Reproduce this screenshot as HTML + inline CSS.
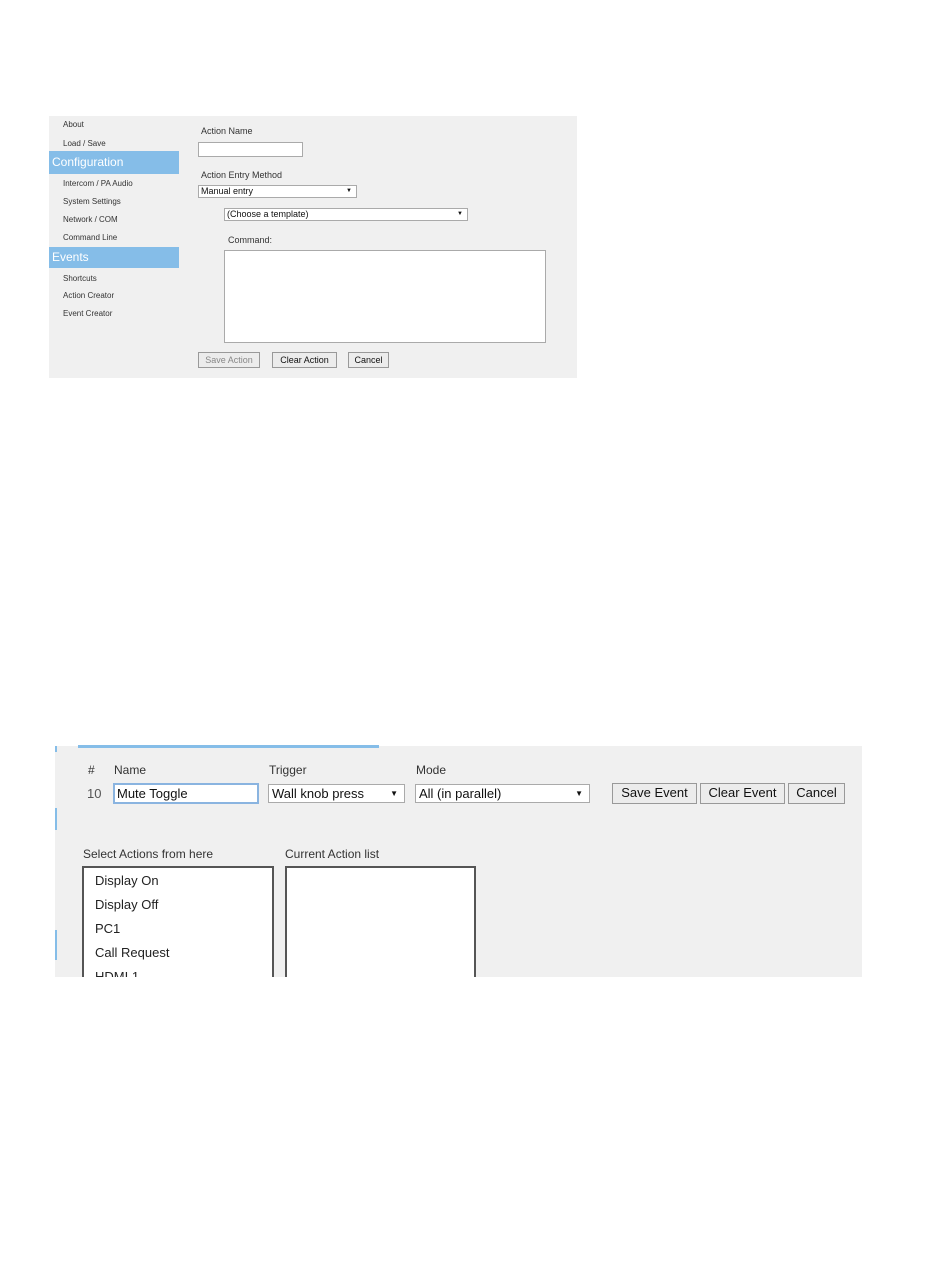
<!DOCTYPE html>
<html><head><style>
body{margin:0;width:950px;height:1276px;background:#fff;position:relative;font-family:"Liberation Sans",sans-serif;overflow:hidden}
.a{position:absolute}
.s{font-size:8px;color:#333}
.hd{background:#85bde8;color:#fff;font-size:12px;padding-left:3px;box-sizing:border-box}
.box{background:#fff;border:1px solid #aaa;box-sizing:border-box}
.btn{background:#ececec;border:1px solid #999;box-sizing:border-box;font-size:9px;text-align:center;color:#111}
.btn2{background:#ececec;border:1px solid #999;box-sizing:border-box;font-size:13px;text-align:center;color:#111;line-height:18px}
.l{font-size:12px;color:#333}
</style></head><body>
<div class="a" style="left:49px;top:116px;width:528px;height:262px;background:#f0f0f0"></div>
<div class="a s" style="left:63px;top:120px">About</div>
<div class="a s" style="left:63px;top:139px">Load / Save</div>
<div class="a hd" style="left:49px;top:151px;width:130px;height:23px;line-height:23px">Configuration</div>
<div class="a s" style="left:63px;top:179px">Intercom / PA Audio</div>
<div class="a s" style="left:63px;top:197px">System Settings</div>
<div class="a s" style="left:63px;top:215px">Network / COM</div>
<div class="a s" style="left:63px;top:233px">Command Line</div>
<div class="a hd" style="left:49px;top:247px;width:130px;height:21px;line-height:21px">Events</div>
<div class="a s" style="left:63px;top:274px">Shortcuts</div>
<div class="a s" style="left:63px;top:291px">Action Creator</div>
<div class="a s" style="left:63px;top:309px">Event Creator</div>
<div class="a" style="left:201px;top:126px;font-size:9px;color:#333">Action Name</div>
<div class="a box" style="left:198px;top:142px;width:105px;height:15px"></div>
<div class="a" style="left:201px;top:170px;font-size:9px;color:#333">Action Entry Method</div>
<div class="a box" style="left:198px;top:185px;width:159px;height:13px;font-size:9px;line-height:11px;padding-left:2px;color:#111">Manual entry<span style="position:absolute;right:4px;font-size:6px">▼</span></div>
<div class="a box" style="left:224px;top:208px;width:244px;height:13px;font-size:9px;line-height:11px;padding-left:2px;color:#111">(Choose a template)<span style="position:absolute;right:4px;font-size:6px">▼</span></div>
<div class="a" style="left:228px;top:235px;font-size:9px;color:#333">Command:</div>
<div class="a box" style="left:224px;top:250px;width:322px;height:93px"></div>
<div class="a btn" style="left:198px;top:352px;width:62px;height:16px;line-height:14px;color:#888">Save Action</div>
<div class="a btn" style="left:272px;top:352px;width:65px;height:16px;line-height:14px">Clear Action</div>
<div class="a btn" style="left:348px;top:352px;width:41px;height:16px;line-height:14px">Cancel</div>

<div class="a" style="left:55px;top:746px;width:807px;height:231px;background:#f0f0f0"></div>
<div class="a" style="left:78px;top:745px;width:301px;height:3px;background:#85bde8"></div>
<div class="a" style="left:55px;top:746px;width:2px;height:6px;background:#85bde8"></div>
<div class="a" style="left:55px;top:808px;width:2px;height:22px;background:#85bde8"></div>
<div class="a" style="left:55px;top:930px;width:2px;height:30px;background:#85bde8"></div>
<div class="a l" style="left:88px;top:763px">#</div>
<div class="a l" style="left:114px;top:763px">Name</div>
<div class="a l" style="left:269px;top:763px">Trigger</div>
<div class="a l" style="left:416px;top:763px">Mode</div>
<div class="a" style="left:87px;top:786px;font-size:13px;color:#555">10</div>
<div class="a box" style="left:113px;top:783px;width:146px;height:21px;border:2px solid #8ab4e0;font-size:13px;line-height:17px;padding-left:2px;color:#111">Mute Toggle</div>
<div class="a box" style="left:268px;top:784px;width:137px;height:19px;font-size:13px;line-height:17px;padding-left:3px;color:#111">Wall knob press<span style="position:absolute;right:6px;font-size:8px">▼</span></div>
<div class="a box" style="left:415px;top:784px;width:175px;height:19px;font-size:13px;line-height:17px;padding-left:3px;color:#111">All (in parallel)<span style="position:absolute;right:6px;font-size:8px">▼</span></div>
<div class="a btn2" style="left:612px;top:783px;width:85px;height:21px">Save Event</div>
<div class="a btn2" style="left:700px;top:783px;width:85px;height:21px">Clear Event</div>
<div class="a btn2" style="left:788px;top:783px;width:57px;height:21px">Cancel</div>
<div class="a l" style="left:83px;top:847px">Select Actions from here</div>
<div class="a l" style="left:285px;top:847px">Current Action list</div>
<div class="a" style="left:82px;top:866px;width:192px;height:111px;background:#fff;border:2px solid #555;border-bottom:none;box-sizing:border-box;font-size:13px;color:#222;line-height:24px;padding:1px 0 0 11px;overflow:hidden">Display On<br>Display Off<br>PC1<br>Call Request<br>HDMI 1</div>
<div class="a" style="left:285px;top:866px;width:191px;height:111px;background:#fff;border:2px solid #555;border-bottom:none;box-sizing:border-box"></div>
</body></html>
